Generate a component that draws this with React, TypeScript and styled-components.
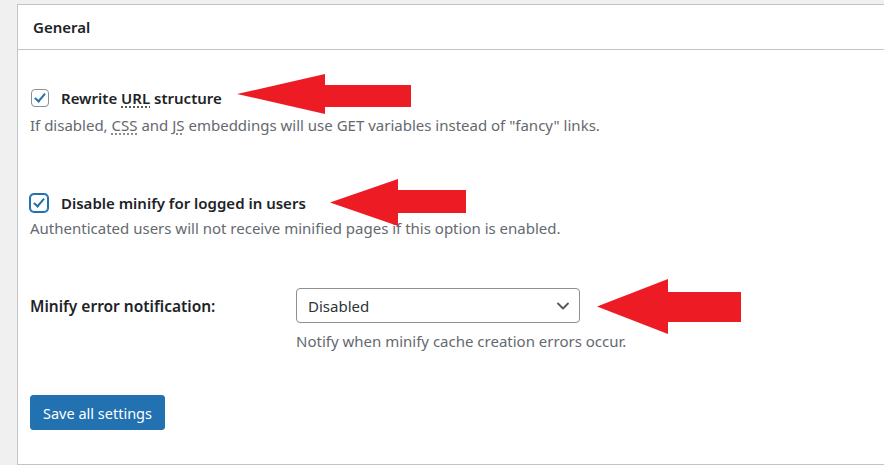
import React from "react";
import styled, {createGlobalStyle} from "styled-components";

const GlobalStyle = createGlobalStyle`
    html, body {
        margin: 0;
        padding: 0;
        background: #ffffff;
        font-family: "Noto Sans", "Open Sans", Arial, sans-serif;
        color: #1d2327;
    }
`

type ArrowProps = { left: number, top: number, w: number, h: number, head: number, shaftTop: number, shaftBottom: number }

const Arrow: React.FC<ArrowProps> = ({left, top, w, h, head, shaftTop, shaftBottom}) => (
    <ArrowWrap style={{left, top}}>
        <svg width={w} height={h} viewBox={`0 0 ${w} ${h}`}>
            <polygon
                fill="#ed1c24"
                points={`0,${h / 2} ${head},0 ${head},${shaftTop} ${w},${shaftTop} ${w},${shaftBottom} ${head},${shaftBottom} ${head},${h}`}/>
        </svg>
    </ArrowWrap>
)

export default function App() {
    return (
        <>
            <GlobalStyle/>
            <Page>
                <Panel>
                    <PanelHeader>General</PanelHeader>
                    <PanelBody>
                        <Option spacing={58}>
                            <CheckRow>
                                <Check/>
                                <Label>Rewrite <Abbr>URL</Abbr> structure</Label>
                            </CheckRow>
                            <Desc>If disabled, <Abbr>CSS</Abbr> and <Abbr>JS</Abbr> embeddings will use GET variables
                                instead of "fancy" links.</Desc>
                        </Option>
                        <Option spacing={48}>
                            <CheckRow>
                                <Check focused/>
                                <Label>Disable minify for logged in users</Label>
                            </CheckRow>
                            <Desc tight>Authenticated users will not receive minified pages if this option is enabled.</Desc>
                        </Option>
                        <FieldRow>
                            <FieldLabel>Minify error notification:</FieldLabel>
                            <FieldControl>
                                <Select>
                                    <span>Disabled</span>
                                    <svg width="20" height="20" viewBox="0 0 24 24" fill="none" stroke="#50575e"
                                         strokeWidth="2.2" strokeLinecap="round" strokeLinejoin="round">
                                        <path d="M6 9l6 6 6-6"/>
                                    </svg>
                                </Select>
                                <Desc>Notify when minify cache creation errors occur.</Desc>
                            </FieldControl>
                        </FieldRow>
                        <SaveButton>Save all settings</SaveButton>
                    </PanelBody>
                </Panel>
                <Arrow left={237} top={74} w={174} h={40} head={88} shaftTop={11} shaftBottom={33}/>
                <Arrow left={330} top={179} w={136} h={47} head={68} shaftTop={11} shaftBottom={34}/>
                <Arrow left={597} top={279} w={144} h={55} head={71} shaftTop={13} shaftBottom={43}/>
            </Page>
        </>
    )
}

const Page = styled.div`
    position: relative;
    height: 465px;
    background: #f0f0f1;
    padding: 4px 0 0 17px;
    box-sizing: border-box;
    overflow: hidden;
`

const Panel = styled.div`
    background: #ffffff;
    border: 1px solid #c3c4c7;
    border-right: none;
    height: 100%;
    width: 900px;
    box-sizing: border-box;
`

const PanelHeader = styled.h2`
    margin: 0;
    height: 45px;
    padding: 0 15px;
    display: flex;
    align-items: center;
    font-size: 15px;
    font-weight: 600;
    border-bottom: 1px solid #c3c4c7;
    box-sizing: border-box;
`

const PanelBody = styled.div`
    padding: 38px 12px 0;
    display: flex;
    flex-direction: column;
`

const Option = styled.div<{ spacing: number }>`
    display: flex;
    flex-direction: column;
    gap: 7px;
    margin-bottom: ${p => p.spacing}px;
`

const CheckRow = styled.div`
    display: flex;
    align-items: center;
    gap: 12px;
    height: 20px;
`

const Check = styled.span<{ focused?: boolean }>`
    position: relative;
    width: 16px;
    height: 16px;
    border: 1px solid ${p => p.focused ? "#2271b1" : "#8c8f94"};
    box-shadow: ${p => p.focused ? "0 0 0 1px #2271b1" : "none"};
    border-radius: 4px;
    background: #fff;
    margin-left: ${p => p.focused ? "0" : "1px"};
    margin-right: ${p => p.focused ? "1px" : "0"};

    &::after {
        content: "";
        position: absolute;
        left: 5px;
        top: 1px;
        width: 4px;
        height: 9px;
        border: solid #2271b1;
        border-width: 0 2px 2px 0;
        transform: rotate(40deg);
    }
`

const Label = styled.span`
    font-size: 15px;
    font-weight: 600;
    color: #1d2327;
`

const Abbr = styled.abbr`
    text-decoration: underline dotted;
    text-underline-offset: 3px;
`

const Desc = styled.p<{ tight?: boolean }>`
    margin: ${p => p.tight ? "-2px 0 2px" : "0"};
    font-size: 15px;
    color: #646970;
    line-height: 20px;
`

const FieldRow = styled.div`
    display: flex;
    align-items: flex-start;
`

const FieldLabel = styled.div`
    width: 266px;
    font-size: 15.5px;
    font-weight: 600;
    padding-top: 7px;
`

const FieldControl = styled.div`
    display: flex;
    flex-direction: column;
    gap: 8px;
`

const Select = styled.div`
    width: 284px;
    height: 35px;
    box-sizing: border-box;
    border: 1px solid #8c8f94;
    border-radius: 4px;
    padding: 0 6px 0 11px;
    display: flex;
    align-items: center;
    justify-content: space-between;
    font-size: 15px;
    color: #2c3338;
`

const SaveButton = styled.button`
    align-self: flex-start;
    margin-top: 44px;
    height: 35px;
    padding: 0 12px;
    background: #2271b1;
    border: 1px solid #2271b1;
    border-radius: 3px;
    color: #fff;
    font-family: inherit;
    font-size: 14.5px;
`

const ArrowWrap = styled.div`
    position: absolute;
    line-height: 0;
`
